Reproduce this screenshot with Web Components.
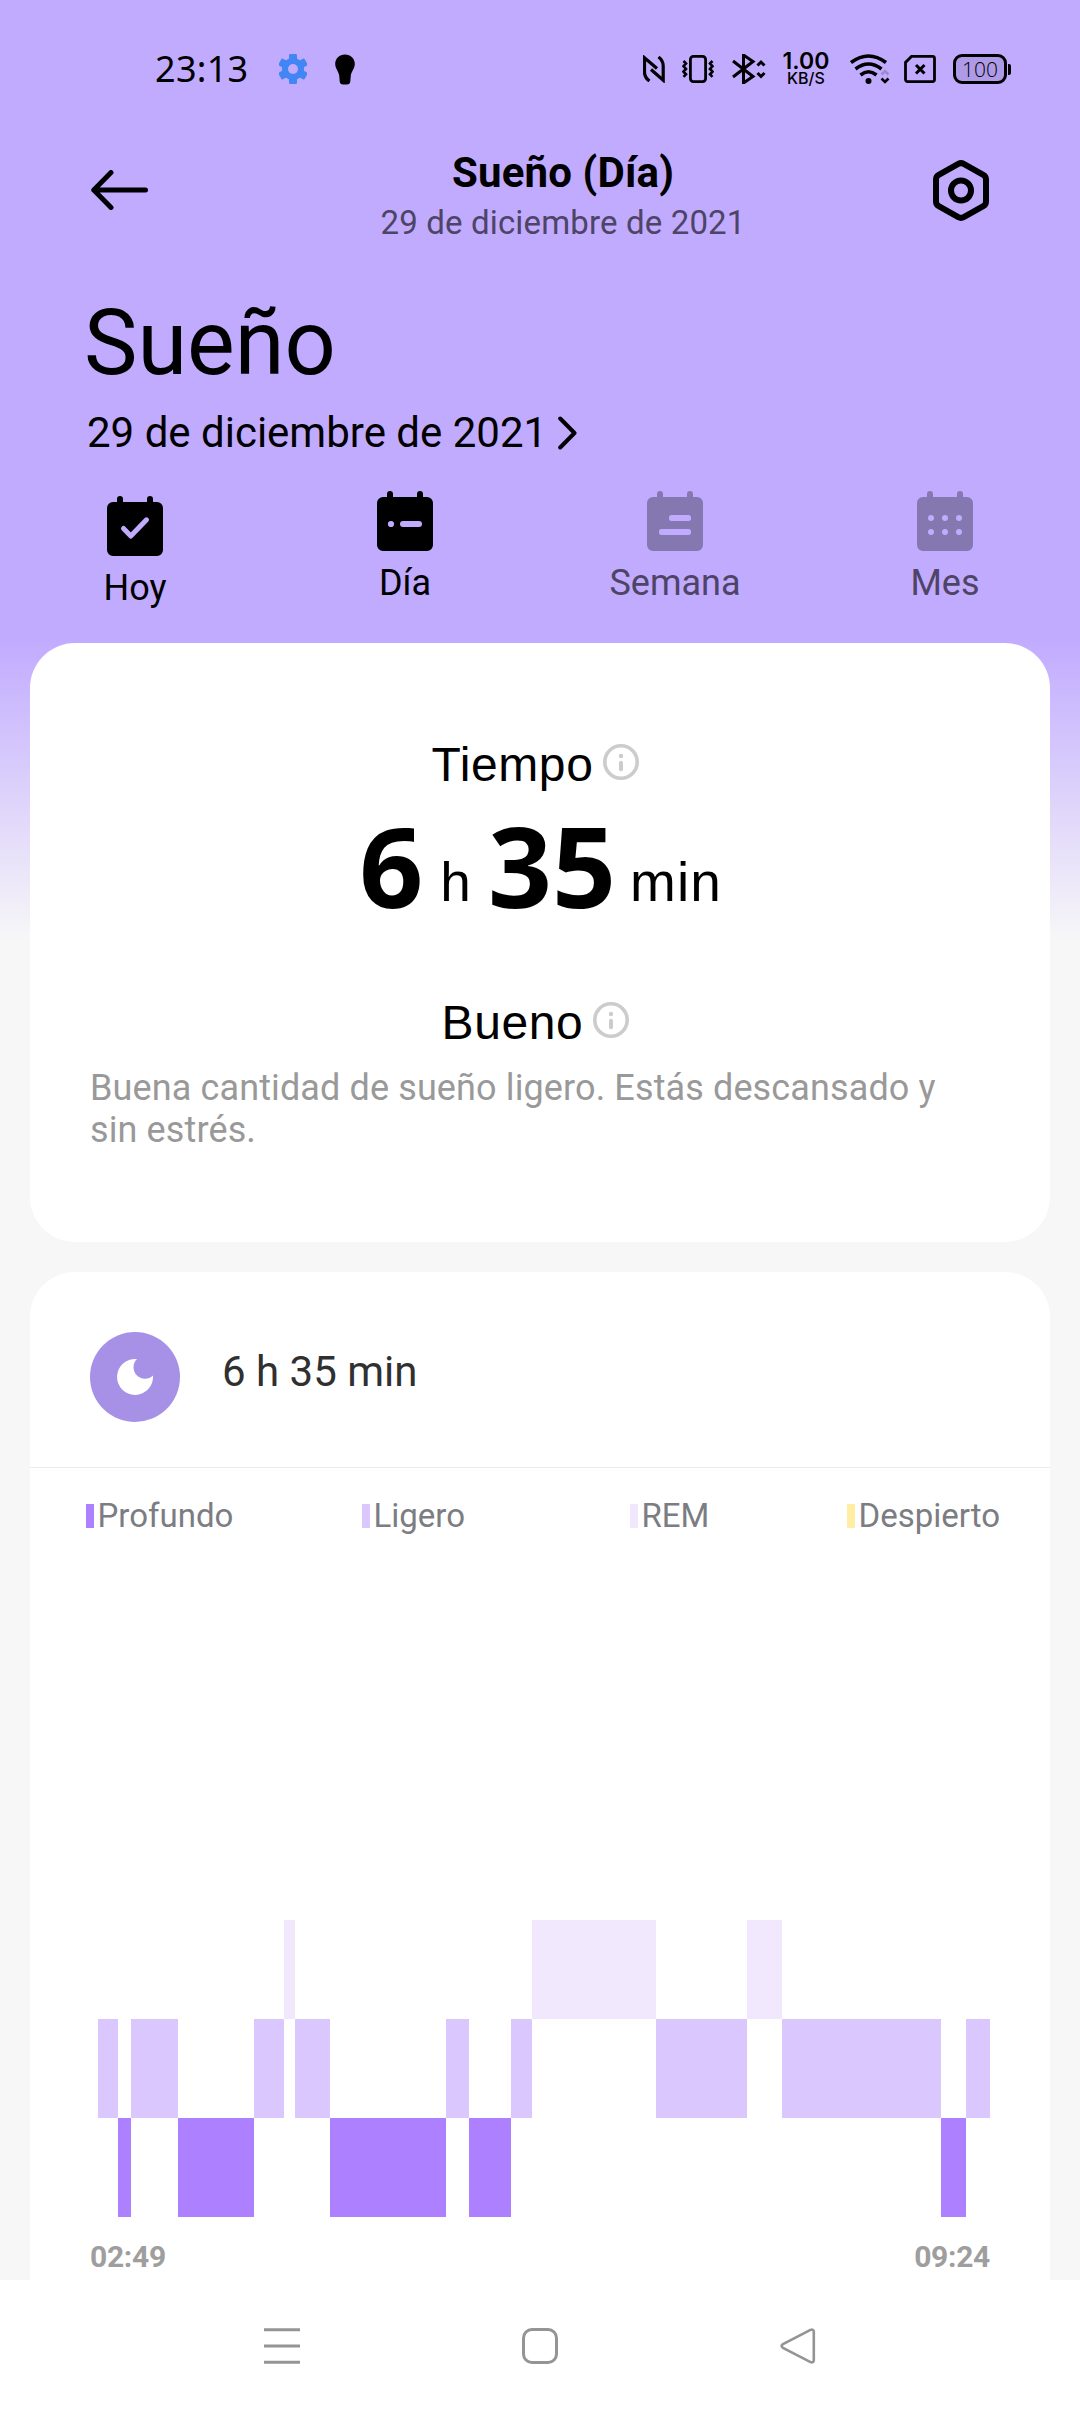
<!DOCTYPE html>
<html lang="es">
<head>
<meta charset="utf-8">
<title>Sueño</title>
<style>
  body {
    margin: 0;
    width: 1080px;
    height: 2412px;
    overflow: hidden;
    background: #fff;
    font-family: Roboto, "Noto Sans", sans-serif;
  }
</style>
</head>
<body>
<sleep-app></sleep-app>

<script>
// icons: [width, height, svg content]
const ICONS = {
  gear: [28, 30, `<g fill="#4285f4"><rect x="10" y="0" width="8" height="30" rx="1.2"/><rect x="10" y="0" width="8" height="30" rx="1.2" transform="rotate(60 14 15)"/><rect x="10" y="0" width="8" height="30" rx="1.2" transform="rotate(-60 14 15)"/></g><circle cx="14" cy="15" r="8" fill="none" stroke="#4285f4" stroke-width="6"/><circle cx="14" cy="15" r="5" fill="#c1abff"/>`],
  bulb: [20, 31, `<path d="M10 .5C4.400 .5 .2 4.600.2 10c0 4.400 3.300 7.200 4 11.500l.5 6q.3 3 3.300 3h4q3 0 3.300-3l.5-6c.7-4.300 4-7.100 4-11.500 0-5.400-4.200-9.500-9.800-9.500z"/>`],
  nfc: [22, 28, `<path d="M6.500 26Q1.500 22.500 1.500 17V2.800L14 13.500M15.500 2Q20.200 5.500 20.200 11V25.200L8 14.500" fill="none" stroke="#000" stroke-width="3.200"/>`],
  vibrate: [32, 28, `<rect x="8.400" y="1.400" width="15.200" height="25.200" rx="3" fill="none" stroke="#000" stroke-width="2.800"/><path d="M1.500 6l2.500 2.500-2.500 2.700 2.500 2.700-2.500 2.700 2.500 2.700-2.500 2.500M30.500 6l-2.500 2.500 2.500 2.700-2.500 2.700 2.500 2.700-2.500 2.700 2.500 2.500" fill="none" stroke="#000" stroke-width="2.600"/>`],
  bluetooth: [34, 30, `<path d="M1 7l20 15.500-9.500 6.500V1l9.500 6.500L1 23" fill="none" stroke="#000" stroke-width="3"/><path d="M25.500 11.500l3.500-3.500 3.500 3.500M25.500 19l3.500 3.500 3.500-3.500" fill="none" stroke="#000" stroke-width="3"/>`],
  wifi: [40, 30, `<g fill="none" stroke="#000" stroke-width="3.600"><path d="M1 8.500Q18.500-4.500 36 8.500"/><path d="M5.500 15Q18.500 5 31.500 15"/><path d="M10.500 21Q18.500 14.500 26.500 21"/></g><circle cx="18.500" cy="27" r="3"/><path d="M31.500 20.500l3.500-3.500 3.500 3.500" fill="none" stroke="#9d89d1" stroke-width="2.600"/><path d="M31.500 24.500l3.500 3.500 3.500-3.500" fill="none" stroke="#000" stroke-width="2.600"/>`],
  sim: [32, 28, `<path d="M7.500 1.400H28.500a2 2 0 0 1 2 2V24.600a2 2 0 0 1-2 2H3.500a2 2 0 0 1-2-2V7.400z" fill="none" stroke="#000" stroke-width="2.800"/><path d="M12 10l8.500 8.500M20.500 10L12 18.500" stroke="#000" stroke-width="3"/>`],
  back: [57, 40, `<path d="M20 2.500L2.800 20 20 37.500M2.800 20H54.500" fill="none" stroke="#000" stroke-width="5" stroke-linecap="round" stroke-linejoin="round"/>`],
  settings: [56, 61, `<path d="M25.300 3.900q2.700-1.500 5.400 0L50.300 14.800q2.700 1.500 2.700 4.600V41.600q0 3.100-2.700 4.600L30.700 57.100q-2.700 1.500-5.400 0L5.700 46.200Q3 44.700 3 41.600V19.400q0-3.100 2.700-4.600z" fill="none" stroke="#000" stroke-width="6"/><circle cx="28" cy="30.500" r="10" fill="none" stroke="#000" stroke-width="6"/>`],
  chevron: [19, 34, `<path d="M2.200 2.500L16.500 17 2.200 31.500" fill="none" stroke="#000" stroke-width="4" stroke-linecap="round" stroke-linejoin="round"/>`],
  info: [36, 36, `<circle cx="18" cy="18" r="16.200" fill="none" stroke="#ccc" stroke-width="3.600"/><circle cx="18" cy="12" r="2.200" fill="#ccc"/><path d="M18 18.800v6.400" stroke="#ccc" stroke-width="4" stroke-linecap="round"/>`],
  moon: [90, 90, `<circle cx="45" cy="45" r="45" fill="#a691e7"/><path d="M47 27A18 18 0 1 0 63 43.500A11 11 0 0 1 47 27z" fill="#fff"/>`],
  menu: [36, 36, `<path d="M0 1.700H36M0 18H36M0 34.300H36" stroke="#949494" stroke-width="3"/>`],
  home: [36, 36, `<rect x="1.500" y="1.500" width="33" height="33" rx="8.500" fill="none" stroke="#949494" stroke-width="3"/>`],
  prev: [36, 36, `<path d="M30.500 1.900 3 16.200q-2.800 1.800 0 3.600L30.500 34.100q3 1.100 3.300-1.800V3.700q-.3-2.900-3.300-1.800z" fill="none" stroke="#949494" stroke-width="2.600"/>`]
};

// marks on the front of each calendar
const CALENDAR_MARKS = {
  check: `<path d="M16.500 32.500l7.300 7.500L39.500 23.800" fill="none" stroke="#c1abff" stroke-width="5" stroke-linecap="round" stroke-linejoin="round"/>`,
  day: `<circle cx="14" cy="33" r="3.100" fill="#c1abff"/><rect x="23" y="30" width="22" height="6" rx="3" fill="#c1abff"/>`,
  week: `<rect x="22" y="24" width="22" height="6" rx="2.500" fill="#c1abff"/><rect x="12" y="38" width="32" height="6" rx="2.500" fill="#c1abff"/>`,
  month: [14, 28, 42].map(x => `<circle cx="${x}" cy="27" r="3" fill="#c1abff"/><circle cx="${x}" cy="41" r="3" fill="#c1abff"/>`).join('')
};

for (const [name, mark] of Object.entries(CALENDAR_MARKS)) {
  ICONS['cal-' + name] = [56, 60, `<path d="M10 6V3a3 3 0 0 1 6 0V6H40V3a3 3 0 0 1 6 0V6H50a6 6 0 0 1 6 6V54a6 6 0 0 1-6 6H6a6 6 0 0 1-6-6V12a6 6 0 0 1 6-6z" fill="currentColor"/>${mark}`];
}

class AppIcon extends HTMLElement {
  constructor() {
    super();
    this.attachShadow({ mode: 'open' });
  }

  connectedCallback() {
    const [w, h, content] = ICONS[this.getAttribute('name')];
    this.shadowRoot.innerHTML = `
      <style>
        :host { display: block; flex: none; width: ${w}px; height: ${h}px; }
        svg { display: block; }
      </style>
      <svg width="${w}" height="${h}" viewBox="0 0 ${w} ${h}">${content}</svg>
    `;
  }
}

// makes an element out of a plain template
function define(name, html) {
  const template = document.createElement('template');
  template.innerHTML = html;
  customElements.define(name, class extends HTMLElement {
    constructor() {
      super();
      this.attachShadow({ mode: 'open' });
      this.shadowRoot.appendChild(template.content.cloneNode(true));
    }
  });
}

customElements.define('app-icon', AppIcon);

define('status-bar', `
  <style>
    :host {
      display: flex;
      align-items: center;
      box-sizing: border-box;
      height: 110px;
      padding: 28px 69px 0 155px;
      font-family: "Noto Sans", sans-serif;
    }
    .time { width: 124px; font-size: 36px; line-height: 40px; letter-spacing: .3px; }
    .bulb { margin-left: 28px; }
    .right { display: flex; align-items: center; margin-left: auto; }
    .speed {
      display: flex;
      flex-direction: column;
      align-items: center;
      width: 50px;
      margin: 0 19px 0 15px;
      font: 600 23px/18px Inter, sans-serif;
    }
    .speed small { font-size: 16px; line-height: 17px; font-weight: 500; }
    .battery {
      box-sizing: border-box;
      width: 54px;
      height: 30px;
      border: 3px solid #000;
      border-radius: 9px;
      background: #ae9ae6;
      font: 300 21px/25px "Open Sans", sans-serif;
      text-align: center;
    }
    .cap { width: 3px; height: 11px; margin-left: 1px; border-radius: 0 2px 2px 0; background: #000; }
  </style>
  <div class="time">23:13</div>
  <app-icon name="gear"></app-icon>
  <app-icon name="bulb" class="bulb"></app-icon>
  <div class="right">
    <app-icon name="nfc"></app-icon>
    <app-icon name="vibrate" style="margin-left:17px"></app-icon>
    <app-icon name="bluetooth" style="margin-left:18px"></app-icon>
    <div class="speed"><span>1.00</span><small>KB/S</small></div>
    <app-icon name="wifi"></app-icon>
    <app-icon name="sim" style="margin:0 17px 0 14px"></app-icon>
    <div class="battery">100</div>
    <div class="cap"></div>
  </div>
`);

define('app-header', `
  <style>
    :host {
      display: flex;
      align-items: center;
      justify-content: space-between;
      height: 160px;
      padding: 0 91px;
    }
    .titles { align-self: flex-start; margin: 38px 0 0 45px; text-align: center; }
    .title { font-size: 42px; line-height: 49px; font-weight: 700; letter-spacing: .15px; }
    .subtitle { margin-top: 6px; font-size: 33px; line-height: 40px; letter-spacing: .15px; color: #4d4466; }
  </style>
  <app-icon name="back"></app-icon>
  <div class="titles">
    <div class="title"><slot></slot></div>
    <div class="subtitle"><slot name="subtitle"></slot></div>
  </div>
  <app-icon name="settings"></app-icon>
`);

define('page-heading', `
  <style>
    :host { display: block; padding: 21px 0 33px 84px; }
    .title { font-size: 90px; line-height: 106px; }
    .date { display: flex; align-items: center; margin: 11px 0 0 3px; font-size: 42px; line-height: 50px; }
    app-icon { margin-left: 11px; }
  </style>
  <div class="title"><slot></slot></div>
  <div class="date"><slot name="date"></slot><app-icon name="chevron"></app-icon></div>
`);

class PeriodTab extends HTMLElement {
  constructor() {
    super();
    this.attachShadow({ mode: 'open' });
    this.shadowRoot.innerHTML = `
      <style>
        :host {
          display: flex;
          flex-direction: column;
          align-items: center;
          gap: 11px;
          font-size: 36px;
          line-height: 42px;
        }
        :host([today]) { margin-top: 5px; }
        :host([inactive]) { color: #4d4466; }
        :host([inactive]) app-icon { color: #8577af; }
      </style>
      <app-icon name="cal-${this.getAttribute('icon')}"></app-icon>
      <span><slot></slot></span>
    `;
  }
}

define('period-tabs', `
  <style>
    :host { display: grid; grid-template-columns: repeat(4, 1fr); align-items: start; height: 152px; }
  </style>
  <slot></slot>
`);

define('app-card', `
  <style>
    :host { display: block; margin: 0 30px; border-radius: 45px; background: #fff; }
  </style>
  <slot></slot>
`);

define('sleep-summary', `
  <style>
    :host { display: block; box-sizing: border-box; height: 599px; padding: 94px 60px 0; }
    .label {
      display: flex;
      justify-content: center;
      gap: 10px;
      padding-right: 9px;
      font: 48px/56px "Liberation Sans", sans-serif;
      letter-spacing: .6px;
    }
    .label app-icon { margin-top: 7px; }
    .value {
      display: flex;
      justify-content: center;
      height: 110px;
      margin: 17px 0 75px;
      padding-left: 1px;
      font: 700 112px/110px "Noto Sans", sans-serif;
    }
    .unit {
      margin: 17px 16px 0 17px;
      font: 55px/110px "Liberation Sans", sans-serif;
      letter-spacing: 1px;
    }
    .unit:last-child { margin: 17px 0 0 14px; }
    .text { margin-top: 16px; font-size: 36px; line-height: 42px; letter-spacing: .12px; color: #999; }
  </style>
  <div class="label">Tiempo<app-icon name="info"></app-icon></div>
  <div class="value">6<span class="unit">h</span>35<span class="unit">min</span></div>
  <div class="label">Bueno<app-icon name="info"></app-icon></div>
  <div class="text">Buena cantidad de sueño ligero. Estás descansado y sin estrés.</div>
`);

define('sleep-total', `
  <style>
    :host {
      display: flex;
      align-items: center;
      gap: 42px;
      height: 90px;
      padding: 60px 60px 45px;
      border-bottom: 1px solid #ebebeb;
    }
    .text { margin-bottom: 11px; font-size: 42px; line-height: 50px; color: #303030; }
  </style>
  <app-icon name="moon"></app-icon>
  <div class="text"><slot></slot></div>
`);

define('chart-legend', `
  <style>
    :host {
      display: grid;
      grid-template-columns: 276px 268px 217px auto;
      padding: 28px 0 0 56px;
      font-size: 33px;
      line-height: 40px;
      color: #7b7d82;
    }
    div { display: flex; align-items: center; gap: 4px; }
    i { width: 7.500px; height: 24px; }
  </style>
  <div><i style="background:#ad80ff"></i>Profundo</div>
  <div><i style="background:#d9c7fe"></i>Ligero</div>
  <div><i style="background:#f1e8fe"></i>REM</div>
  <div><i style="background:#ffeda3"></i>Despierto</div>
`);

// [stage, width]
const STAGES = [
  ['light', 20], ['deep', 13], ['light', 47], ['deep', 76], ['light', 30],
  ['rem', 11], ['light', 35], ['deep', 116], ['light', 23], ['deep', 42],
  ['light', 21], ['rem', 124], ['light', 91], ['rem', 35], ['light', 159],
  ['deep', 25], ['light', 24]
];

class SleepChart extends HTMLElement {
  constructor() {
    super();
    this.attachShadow({ mode: 'open' });
    this.shadowRoot.innerHTML = `
      <style>
        :host { display: block; padding: 384px 60px 0; }
        .plot { display: flex; height: 297px; padding-left: 8px; }
        .plot div { height: 99px; }
        .rem { background: #f1e8fe; }
        .light { margin-top: 99px; background: #d9c7fe; }
        .deep { margin-top: 198px; background: #ad80ff; }
        .axis {
          display: flex;
          justify-content: space-between;
          margin-top: 22px;
          font-size: 30px;
          line-height: 36px;
          font-weight: 700;
          letter-spacing: -.3px;
          color: #9e9e9e;
        }
      </style>
      <div class="plot">${STAGES.map(([stage, w]) => `<div class="${stage}" style="width:${w}px"></div>`).join('')}</div>
      <div class="axis"><span>${this.getAttribute('start')}</span><span>${this.getAttribute('end')}</span></div>
    `;
  }
}

define('nav-bar', `
  <style>
    :host {
      display: flex;
      align-items: center;
      justify-content: center;
      gap: 222px;
      height: 132px;
      background: #fff;
    }
  </style>
  <app-icon name="menu"></app-icon>
  <app-icon name="home"></app-icon>
  <app-icon name="prev"></app-icon>
`);

customElements.define('period-tab', PeriodTab);
customElements.define('sleep-chart', SleepChart);

define('sleep-app', `
  <style>
    :host { display: block; }
    main {
      height: 2280px;
      overflow: hidden;
      background: linear-gradient(#c1abff 640px, #f7f7f7 940px);
    }
    .detail { height: 1100px; margin-top: 30px; }
  </style>
  <main>
    <status-bar></status-bar>
    <app-header>Sueño (Día)<span slot="subtitle">29 de diciembre de 2021</span></app-header>
    <page-heading>Sueño<span slot="date">29 de diciembre de 2021</span></page-heading>
    <period-tabs>
      <period-tab icon="check" today>Hoy</period-tab>
      <period-tab icon="day">Día</period-tab>
      <period-tab icon="week" inactive>Semana</period-tab>
      <period-tab icon="month" inactive>Mes</period-tab>
    </period-tabs>
    <app-card><sleep-summary></sleep-summary></app-card>
    <app-card class="detail">
      <sleep-total>6 h 35 min</sleep-total>
      <chart-legend></chart-legend>
      <sleep-chart start="02:49" end="09:24"></sleep-chart>
    </app-card>
  </main>
  <nav-bar></nav-bar>
`);
</script>
</body>
</html>
